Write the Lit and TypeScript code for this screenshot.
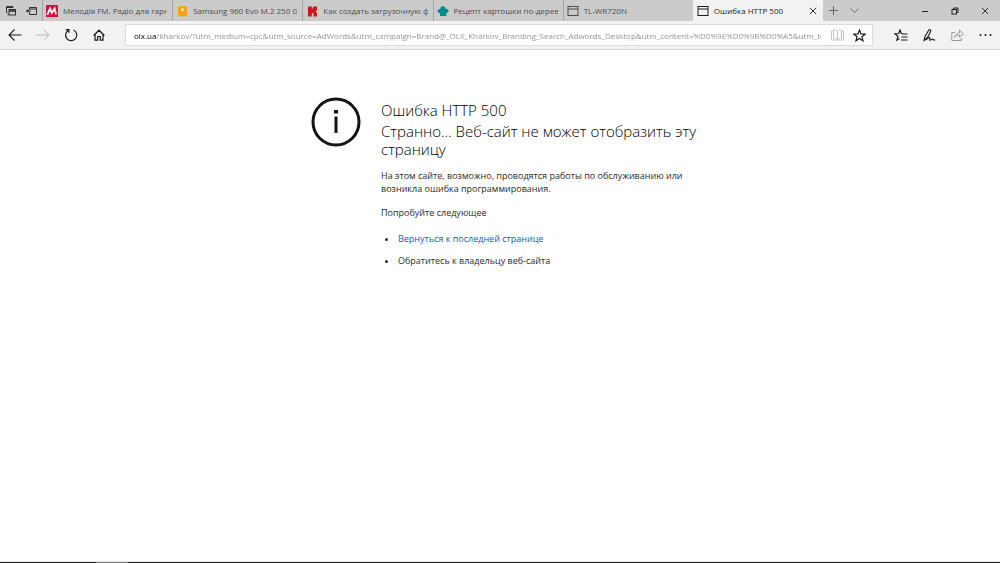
import { LitElement, html, css, svg, nothing } from "lit";
import { customElement, state } from "lit/decorators.js";

const windowGlyph = svg`<rect x="1" y="1.5" width="10" height="9" fill="none" stroke="currentColor"/><path d="M1 4h10" stroke="currentColor" fill="none"/>`;

const tabs = [
  {
    title: "Мелодія FM. Радіо для гарно",
    icon: svg`<rect width="12" height="12" fill="#d3123f"/><path d="M1.200 9.800 4 3.600 5.800 7.800 8.600 3.400 10 9.200" fill="none" stroke="#fff" stroke-width="1.800"/>`,
  },
  {
    title: "Samsung 960 Evo M.2 250 GB",
    icon: svg`<rect x="2" y="1" width="9" height="10.5" rx="2" fill="#f7a413"/><circle cx="6.5" cy="4.6" r="1.6" fill="#fde7b5"/>`,
  },
  {
    title: "Как создать загрузочную фл",
    icon: svg`<path d="M2 1.500h3.800v3.300L7.500 1.500H11V5L9.500 6.500 11 8v3.500H7.500V8.500L6.500 7.500 5.800 8.500v3H2z" fill="#d01319"/>`,
  },
  {
    title: "Рецепт картошки по-дереве",
    icon: svg`<path d="M3.400 4a2.600 2.600 0 0 1 5.300-.2C11 3.300 12.600 6 10.700 7.600L9.300 8.300V11H3V8.300C-.5 8-.3 3.600 3.400 4z" fill="#068a8c"/>`,
  },
  { title: "TL-WR720N", icon: windowGlyph },
  { title: "Ошибка HTTP 500", icon: windowGlyph },
];

const address =
  "olx.ua/kharkov/?utm_medium=cpc&utm_source=AdWords&utm_campaign=Brand@_OLX_Kharkov_Branding_Search_Adwords_Desktop&utm_content=%D0%9E%D0%9B%D0%A5&utm_term=olx";

@customElement("tab-strip")
class TabStrip extends LitElement {
  @state() private active = 5;

  static styles = css`
    :host { display: flex; height: 21px; background: #cbcbcb; color: #4c4c4c; }
    button { border: 0; padding: 0; background: none; color: inherit; font: inherit; display: flex; align-items: center; justify-content: center; }
    svg { display: block; flex: none; }
    .tools { display: flex; flex: none; width: 42px; color: #333; }
    .tools button { flex: 1; }
    .tabs { display: flex; flex: 0 1 781px; min-width: 0; }
    .tab { flex: 1; min-width: 0; display: flex; align-items: center; padding: 0 5px 0 3px; border-left: 1px solid #a5a5a5; box-sizing: border-box; }
    .tab.active { background: #f2f2f2; color: #1c1c1c; border-left-color: #f2f2f2; }
    .label { flex: 1; min-width: 0; gap: 5px; justify-content: flex-start; text-align: left; }
    .title { flex: 1; min-width: 0; overflow: hidden; white-space: nowrap; font-size: 8px; line-height: 20px; }
    .close { width: 10px; height: 20px; }
    .extra { display: flex; color: #666; }
    .extra button { width: 21px; }
    .controls { display: flex; margin-left: auto; color: #222; }
    .controls button { width: 30px; }
  `;

  render() {
    return html`
      <div class="tools">
        <button aria-label="Отложенные вкладки"><svg width="12" height="12" viewBox="0 0 12 12" fill="none" stroke="currentColor"><path d="M2.500 7.500h-1v-6h6.500v1M1.500 2.500h6.500"/><path d="M4 9.500H2.500" /><rect x="4" y="4.500" width="6.500" height="5.500"/><path d="M4 6h6.500" stroke-width="1.600"/></svg></button>
        <button aria-label="Отложить вкладки"><svg width="12" height="12" viewBox="0 0 12 12" fill="none" stroke="currentColor"><path d="M3.500 4.500v-2h7v7h-7v-2M3.500 4h7M0 6h5"/><path d="M2.500 4v4L0 6z" fill="currentColor" stroke="none"/></svg></button>
      </div>
      <div class="tabs" role="tablist">
        ${tabs.map(
          (tab, i) => html`<div class="tab ${i === this.active ? "active" : ""}">
            <button class="label" role="tab" aria-selected=${i === this.active} @click=${() => (this.active = i)}>
              <svg width="12" height="12" viewBox="0 0 12 12">${tab.icon}</svg>
              <span class="title">${tab.title}</span>
            </button>
            ${i === this.active
              ? html`<button class="close" aria-label="Закрыть вкладку"><svg width="8" height="8" viewBox="0 0 8 8" stroke="currentColor" stroke-width=".9"><path d="m.8.8 6.400 6.400M7.200.8.800 7.200"/></svg></button>`
              : nothing}
          </div>`
        )}
      </div>
      <div class="extra">
        <button aria-label="Новая вкладка"><svg width="9" height="9" viewBox="0 0 9 9" stroke="currentColor"><path d="M4.500 0v9M0 4.500h9"/></svg></button>
        <button aria-label="Показать эскизы"><svg width="9" height="9" viewBox="0 0 9 9" fill="none" stroke="currentColor"><path d="M.5 2.500l4 4 4-4"/></svg></button>
      </div>
      <div class="controls">
        <button aria-label="Свернуть"><svg width="8" height="8" viewBox="0 0 8 8" stroke="currentColor"><path d="M1 4.500h6"/></svg></button>
        <button aria-label="Развернуть"><svg width="8" height="8" viewBox="0 0 8 8" fill="none" stroke="currentColor"><rect x="1" y="2.500" width="4.500" height="4.500"/><path d="M2.500 2.500v-1.500h4.500v4.500h-1.500"/></svg></button>
        <button aria-label="Закрыть"><svg width="8" height="8" viewBox="0 0 8 8" stroke="currentColor" stroke-width=".9"><path d="m1 1 6 6M7 1l-6 6"/></svg></button>
      </div>
    `;
  }
}

@customElement("address-bar")
class AddressBar extends LitElement {
  static styles = css`
    :host { display: flex; align-items: center; height: 28px; background: #f2f2f2; border-bottom: 1px solid #d4d4d4; color: #1a1a1a; }
    button { border: 0; padding: 0; background: none; color: inherit; display: flex; align-items: center; justify-content: center; width: 28px; height: 28px; }
    button:disabled { color: #b5b5b5; }
    svg { display: block; fill: none; stroke: currentColor; }
    .nav { display: flex; flex: none; width: 125px; box-sizing: border-box; padding-left: 1px; }
    .field { flex: 1; min-width: 0; display: flex; align-items: center; height: 20px; background: #fff; border: 1px solid #dcdcdc; padding-left: 8px; }
    .url { flex: 1; min-width: 0; height: 20px; border: 0; padding: 0; outline: 0; font: inherit; font-size: 8px;
      background: linear-gradient(90deg, #000 22px, #8f8f8f 22px); background-clip: text; -webkit-background-clip: text; -webkit-text-fill-color: transparent; }
    .field button { width: 21px; height: 20px; }
    .field .reading { width: 28px; color: #c8c8c8; padding-left: 4px; }
    .field .reading svg { flex: none; }
    .field .star { margin-right: 2px; }
    .actions { display: flex; margin: 0 1px 0 14px; }
  `;

  render() {
    return html`
      <nav class="nav">
        <button aria-label="Назад"><svg width="14" height="12" viewBox="0 0 14 12" stroke-width="1.100"><path d="M1 6h12.500M6.500.5 1 6l5.500 5.500"/></svg></button>
        <button aria-label="Вперёд" disabled><svg width="14" height="12" viewBox="0 0 14 12"><path d="M.5 6H13M7.500.5 13 6l-5.500 5.500"/></svg></button>
        <button aria-label="Обновить"><svg width="14" height="14" viewBox="0 0 14 14" stroke-width="1.200"><path d="M4.500 2.200A5.600 5.600 0 1 0 9.500 2M1.800 1.700H4.900V4.700"/></svg></button>
        <button aria-label="Домой"><svg width="12" height="12" viewBox="0 0 12 12" stroke-width="1.200"><path d="M.6 6.500 6 1.200l5.400 5.300M2 5.500v5.700h2.700V7.500h2.600v3.700H10V5.500"/></svg></button>
      </nav>
      <div class="field">
        <input class="url" type="text" aria-label="Адрес" spellcheck="false" .value=${address} />
        <button class="reading" aria-label="Режим чтения" disabled><svg width="13" height="12" viewBox="0 0 13 12"><path d="M6.500 2v9M6.500 2C5.500.8 3 .8 2.500 1v8.500c1.500-.2 3 0 4 1.200 1-1.200 2.500-1.400 4-1.200V1C9 .8 7.500.8 6.500 2zM2.500 2h-2v9h5.500l.5.500.5-.5h5.500V2h-2"/></svg></button>
        <button class="star" aria-label="В избранное"><svg width="13" height="13" viewBox="0 0 13 13" stroke-width="1.200"><path d="m6.500 1 1.500 3.900 4.100.2-3.200 2.600 1.100 4.100-3.500-2.300L3 11.800l1.100-4.100L.9 5.100 5 4.900z"/></svg></button>
      </div>
      <div class="actions">
        <button aria-label="Центр"><svg width="14" height="13" viewBox="0 0 14 13" stroke-width="1.200"><path d="M8.500 4.500 7.300 4.400 6 1 4.700 4.500.9 4.700l3 2.500-1 4L5.500 9.600M8 5h5.500M7.500 8h6M7 11h6.500"/></svg></button>
        <button aria-label="Заметки"><svg width="14" height="14" viewBox="0 0 14 14" stroke-width="1.100"><path d="M2 12.300 3 8.500 6.700 2.200C7.300.9 9.300 1.700 8.700 3.200L5.400 9.800zM2 12.300c2.500.3 4.200-3 5.600-2.800 1 .2-.7 2.500.5 2.700 1 .1 1.400-1.400 2.300-1.200.7.200.4 1.300 2.800 1"/></svg></button>
        <button aria-label="Поделиться" disabled><svg width="13" height="12" viewBox="0 0 13 12"><path d="M4 3.500H.8v8h9.500V9M3.500 8.500c.3-3 2.200-4.500 5-4.500V1.200l3.800 3.600-3.800 3.500V6C6.500 6 4.800 6.700 3.500 8.500z" stroke="#999"/></svg></button>
        <button aria-label="Дополнительно"><svg width="13" height="4" viewBox="0 0 13 4"><g fill="currentColor" stroke="none"><circle cx="1.500" cy="2" r="1"/><circle cx="6.500" cy="2" r="1"/><circle cx="11.500" cy="2" r="1"/></g></svg></button>
      </div>
    `;
  }
}

@customElement("error-page")
class ErrorPage extends LitElement {
  static styles = css`
    :host { display: flex; flex: 1; justify-content: center; align-items: flex-start; gap: 20px; padding: 47px 0 0 20px; background: #fff; color: #2b2b2b; }
    .info { flex: none; display: block; }
    .text { width: 328px; padding-top: 4px; }
    h1, h2 { margin: 0; font-weight: 300; font-size: 15px; line-height: 18px; color: #000; }
    h2 { margin-top: 3px; }
    p { margin: 11px 0 0; font-size: 9px; line-height: 13px; }
    ul { margin: 13px 0 0; padding-left: 17px; font-size: 9px; line-height: 13px; }
    li + li { margin-top: 9px; }
    a { color: #1160b0; text-decoration: none; }
  `;

  render() {
    return html`
      <svg class="info" width="50" height="50" viewBox="0 0 50 50"><circle cx="25" cy="25" r="23" fill="none" stroke="#141414" stroke-width="3"/><path d="M23.500 19.500h3V36h-3zM23 13h4v3.500h-4z" fill="#141414"/></svg>
      <main class="text">
        <h1>Ошибка HTTP 500</h1>
        <h2>Странно... Веб-сайт не может отобразить эту страницу</h2>
        <p>На этом сайте, возможно, проводятся работы по обслуживанию или возникла ошибка программирования.</p>
        <p>Попробуйте следующее</p>
        <ul>
          <li><a href="#back">Вернуться к последней странице</a></li>
          <li>Обратитесь к владельцу веб-сайта</li>
        </ul>
      </main>
    `;
  }
}

@customElement("app-root")
class AppRoot extends LitElement {
  static styles = css`
    :host { display: flex; flex-direction: column; min-height: 100vh; font-family: "Open Sans", "Noto Sans", sans-serif; }
    .taskbar { height: 1px; background: #222; border-top: 1px solid #e6e6e6; padding-left: 96px; }
    .running { width: 32px; height: 1px; background: #777; }
  `;

  render() {
    return html`
      <tab-strip></tab-strip>
      <address-bar></address-bar>
      <error-page></error-page>
      <div class="taskbar"><div class="running"></div></div>
    `;
  }
}
